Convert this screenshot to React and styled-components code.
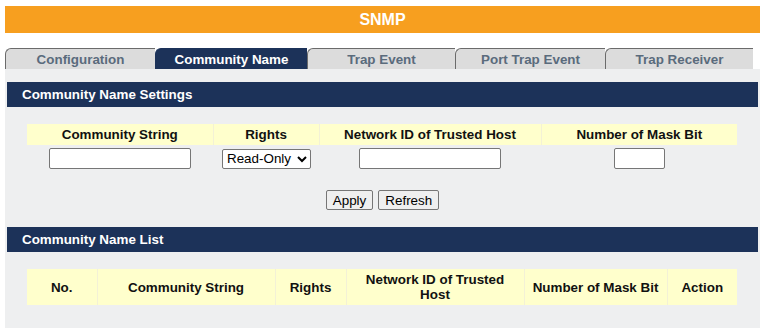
import React from "react"
import styled, { createGlobalStyle } from "styled-components"

const GlobalStyle = createGlobalStyle`
  html, body {
    margin: 0;
    background: #ffffff;
    font-family: Arial, "Liberation Sans", sans-serif;
  }
`

const Page = styled.div`
  width: 755px;
  padding: 6px 4px 0 5px;
`

const TitleBar = styled.div`
  height: 27px;
  background: #f79f1f;
  color: #ffffff;
  font-weight: bold;
  font-size: 16px;
  display: flex;
  align-items: center;
  justify-content: center;
`

const Tabs = styled.div`
  display: flex;
  margin-top: 15px;
  width: 748px;
`

const Tab = styled.div`
  box-sizing: border-box;
  width: ${(p) => p.w}px;
  height: 21px;
  border-top: 1px solid ${(p) => (p.active ? "#1c3259" : "#6b6b6b")};
  border-left: 1px solid ${(p) => (p.active ? "#1c3259" : "#6b6b6b")};
  border-top-left-radius: 6px;
  background: ${(p) => (p.active ? "#1c3259" : "#dcdcdc")};
  color: ${(p) => (p.active ? "#ffffff" : "#5a6b7c")};
  font-weight: bold;
  font-size: 13.4px;
  display: flex;
  align-items: center;
  justify-content: center;
`

const Panel = styled.div`
  background: #eeeff0;
  padding: 13px 2px 23px 2px;
`

const SectionHeader = styled.div`
  height: 25px;
  background: #1c3259;
  color: #ffffff;
  font-weight: bold;
  font-size: 13.4px;
  display: flex;
  align-items: center;
  padding-left: 15px;
  margin-top: ${(p) => p.top || 0}px;
`

const Table = styled.table`
  border-collapse: collapse;
  width: 710px;
  margin: 17px 0 0 20px;
  table-layout: fixed;
`

const Th = styled.th`
  box-sizing: border-box;
  background: #ffffcc;
  height: ${(p) => p.h}px;
  width: ${(p) => p.w}px;
  padding: 0 4px;
  font-size: 13.4px;
  font-weight: bold;
  color: #111111;
  text-align: center;
  line-height: 15px;
  border-left: 1px solid #f3f1d6;
  &:first-child {
    border-left: none;
  }
`

const Td = styled.td`
  height: 27px;
  text-align: center;
  padding: 0;
`

const TextInput = styled.input`
  box-sizing: border-box;
  width: ${(p) => p.w}px;
  height: 21px;
  border: 1px solid #767676;
  border-radius: 2px;
  background: #ffffff;
  vertical-align: middle;
`

const Select = styled.select`
  box-sizing: border-box;
  width: 89px;
  height: 20px;
  font-family: Arial, "Liberation Sans", sans-serif;
  font-size: 13.4px;
  border: 1px solid #767676;
  border-radius: 2px;
  background: #ffffff;
  color: #000000;
  vertical-align: middle;
  margin-left: 1px;
`

const ButtonRow = styled.div`
  display: flex;
  justify-content: center;
  gap: 5px;
  margin-top: 18px;
`

const Button = styled.button`
  height: 20px;
  padding: 0 6px;
  font-family: Arial, "Liberation Sans", sans-serif;
  font-size: 13.4px;
  color: #000000;
  background: #efefef;
  border: 1px solid #767676;
  border-radius: 2px;
`

const settingsCols = [
  { label: "Community String", w: 186 },
  { label: "Rights", w: 106 },
  { label: "Network ID of Trusted Host", w: 222 },
  { label: "Number of Mask Bit", w: 196 },
]

const listCols = [
  { label: "No.", w: 70 },
  { label: "Community String", w: 178 },
  { label: "Rights", w: 71 },
  { label: "Network ID of Trusted Host", w: 178 },
  { label: "Number of Mask Bit", w: 143 },
  { label: "Action", w: 70 },
]

const tabs = [
  { label: "Configuration", w: 150 },
  { label: "Community Name", w: 152, active: true },
  { label: "Trap Event", w: 148 },
  { label: "Port Trap Event", w: 150 },
  { label: "Trap Receiver", w: 148 },
]

const App = () => {
  return (
    <>
      <GlobalStyle />
      <Page>
        <TitleBar>SNMP</TitleBar>
        <Tabs>
          {tabs.map((t) => (
            <Tab key={t.label} w={t.w} active={t.active}>
              {t.label}
            </Tab>
          ))}
        </Tabs>
        <Panel>
          <SectionHeader>Community Name Settings</SectionHeader>
          <Table>
            <thead>
              <tr>
                {settingsCols.map((c) => (
                  <Th key={c.label} w={c.w} h={21}>
                    {c.label}
                  </Th>
                ))}
              </tr>
            </thead>
            <tbody>
              <tr>
                <Td>
                  <TextInput w={142} />
                </Td>
                <Td>
                  <Select defaultValue="ro">
                    <option value="ro">Read-Only</option>
                    <option value="rw">Read-Write</option>
                  </Select>
                </Td>
                <Td>
                  <TextInput w={142} />
                </Td>
                <Td>
                  <TextInput w={51} />
                </Td>
              </tr>
            </tbody>
          </Table>
          <ButtonRow>
            <Button>Apply</Button>
            <Button>Refresh</Button>
          </ButtonRow>
          <SectionHeader top={17}>Community Name List</SectionHeader>
          <Table>
            <thead>
              <tr>
                {listCols.map((c) => (
                  <Th key={c.label} w={c.w} h={36}>
                    {c.label}
                  </Th>
                ))}
              </tr>
            </thead>
          </Table>
        </Panel>
      </Page>
    </>
  )
}

export default App
